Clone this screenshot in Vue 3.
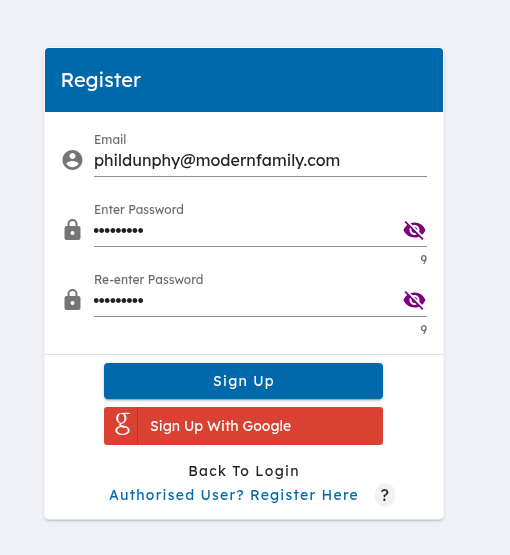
<template>
  <div class="page">
    <form class="card" @submit.prevent>
      <div class="card-header">
        <h1>Register</h1>
      </div>

      <div class="card-body">
        <div v-for="field in fields" :key="field.id" class="field">
          <svg class="field-icon" viewBox="0.5 0 24 24">
            <path :d="icons[field.icon]" />
          </svg>
          <div class="field-main">
            <label :for="field.id">{{ field.label }}</label>
            <div class="field-line">
              <input
                :id="field.id"
                v-model="field.value"
                :type="field.secret && !field.shown ? 'password' : 'text'"
                :class="{ secret: field.secret && !field.shown }"
                autocomplete="off"
                spellcheck="false"
              />
              <button
                v-if="field.secret"
                type="button"
                class="eye-btn"
                aria-label="toggle password"
                @click="field.shown = !field.shown"
              >
                <svg viewBox="0.5 0 24 24">
                  <path :d="field.shown ? icons.eye : icons.eyeOff" />
                </svg>
              </button>
            </div>
            <div v-if="field.secret" class="counter">{{ field.value.length }}</div>
          </div>
        </div>
      </div>

      <div class="card-actions">
        <button type="submit" class="signup-btn"><span>Sign Up</span></button>
        <button type="button" class="google-btn">
          <span class="google-logo">
            <svg viewBox="0 0 16 24">
              <path class="ring" d="M1 6.3a5.3 5.4 0 1 0 10.6 0a5.3 5.4 0 1 0-10.6 0zM3.3 6.3a3 4.5 0 1 1 6 0a3 4.5 0 1 1-6 0z" />
              <path class="ring" d="M0.3 18.4a7.2 4.7 0 1 0 14.4 0a7.2 4.7 0 1 0-14.4 0zM2.3 18.3a5.3 3.6 0 1 1 10.6 0a5.3 3.6 0 1 1-10.6 0z" />
              <path class="ear" d="M6.5 1.4H15" />
              <path class="neck" d="M6.2 11.3C4.4 12.8 5 14 7.6 14.5L10.5 15.1" />
            </svg>
          </span>
          <span class="google-text">Sign Up With Google</span>
        </button>
        <a class="link back">Back To Login</a>
        <div class="help-row">
          <a class="link authorised">Authorised User? Register Here</a>
          <span class="help">?</span>
        </div>
      </div>
    </form>
  </div>
</template>

<script setup>
import { reactive } from 'vue'

// form fields, in display order
const fields = reactive([
  { id: 'email', label: 'Email', icon: 'account', value: 'phildunphy@modernfamily.com', secret: false, shown: false },
  { id: 'password', label: 'Enter Password', icon: 'lock', value: 'dunphy123', secret: true, shown: false },
  { id: 'repeat', label: 'Re-enter Password', icon: 'lock', value: 'dunphy123', secret: true, shown: false }
])

// material icon paths
const icons = {
  account: 'M12 2C6.48 2 2 6.48 2 12s4.48 10 10 10 10-4.48 10-10S17.52 2 12 2zm0 3c1.66 0 3 1.34 3 3s-1.34 3-3 3-3-1.34-3-3 1.34-3 3-3zm0 14.2c-2.5 0-4.71-1.28-6-3.22.03-1.99 4-3.08 6-3.08 1.99 0 5.97 1.09 6 3.08-1.29 1.94-3.5 3.22-6 3.22z',
  lock: 'M12 17a2 2 0 0 0 2-2a2 2 0 0 0-4 0a2 2 0 0 0 2 2m6-9a2 2 0 0 1 2 2v10a2 2 0 0 1-2 2H6a2 2 0 0 1-2-2V10a2 2 0 0 1 2-2h1V6a5 5 0 0 1 10 0v2h1m-6-5a3 3 0 0 0-3 3v2h6V6a3 3 0 0 0-3-3z',
  eye: 'M12 4.5C7 4.5 2.73 7.61 1 12c1.73 4.39 6 7.5 11 7.5s9.27-3.11 11-7.5c-1.73-4.39-6-7.5-11-7.5zM12 17c-2.76 0-5-2.24-5-5s2.24-5 5-5 5 2.24 5 5-2.24 5-5 5zm0-8c-1.66 0-3 1.34-3 3s1.34 3 3 3 3-1.34 3-3-1.34-3-3-3z',
  eyeOff: 'M12 7c2.76 0 5 2.24 5 5 0 .65-.13 1.26-.36 1.83l2.92 2.92c1.51-1.26 2.7-2.89 3.43-4.75-1.73-4.39-6-7.5-11-7.5-1.4 0-2.74.25-3.98.7l2.16 2.16C10.74 7.13 11.35 7 12 7zM2 4.27l2.28 2.28.46.46C3.08 8.3 1.78 10.02 1 12c1.73 4.39 6 7.5 11 7.5 1.55 0 3.03-.3 4.38-.84l.42.42L19.73 22 21 20.73 3.27 3 2 4.27zM7.53 9.8l1.55 1.55c-.05.21-.08.43-.08.65 0 1.66 1.34 3 3 3 .22 0 .44-.03.65-.08l1.55 1.55c-.67.33-1.41.53-2.2.53-2.76 0-5-2.24-5-5 0-.79.2-1.53.53-2.2zm4.31-.78l3.15 3.15.02-.16c0-1.66-1.34-3-3-3l-.17.01z'
}
</script>

<style>
body {
  background: #eff1f6;
}
</style>

<style scoped>
.page {
  min-height: 555px;
  padding: 48px 67px 0 45px;
  box-sizing: border-box;
  background: #eff1f6;
  font-family: "Lexend Deca", Lexend, Inter, sans-serif;
  color: rgba(0, 0, 0, 0.87);
}

.card {
  height: 470.5px;
  background: #fff;
  border-radius: 4px;
  overflow: hidden;
  will-change: transform;
  box-shadow: 0 0 0 1px rgba(255, 255, 255, 0.7), 0 3px 1px -2px rgba(0, 0, 0, 0.2), 0 2px 2px 0 rgba(0, 0, 0, 0.14), 0 1px 5px 0 rgba(0, 0, 0, 0.12);
}

.card-header {
  height: 64px;
  padding: 0 15.5px;
  display: flex;
  align-items: center;
  background: #0069ac;
}

.card-header h1 {
  margin: 0 0 1px;
  color: #fff;
  font-size: 20px;
  font-weight: 400;
}

.card-body {
  height: 242px;
  padding: 16px 16px 0;
  box-sizing: border-box;
}

.field {
  height: 70px;
  display: flex;
  gap: 9px;
}

.field-icon {
  width: 24px;
  height: 24px;
  margin-top: 20px;
  flex: none;
  fill: #757575;
}

.field-main {
  flex: 1;
  min-width: 0;
}

label {
  display: block;
  height: 20px;
  padding-top: 3px;
  box-sizing: border-box;
  color: rgba(0, 0, 0, 0.6);
  font-size: 12px;
  line-height: 18px;
}

.field-line {
  height: 29px;
  box-sizing: border-box;
  display: flex;
  border-bottom: 1px solid #8f8f8f;
}

input {
  flex: 1;
  min-width: 0;
  height: 24px;
  margin: 0;
  padding: 0;
  border: none;
  outline: none;
  background: transparent;
  color: inherit;
  font-family: inherit;
  font-size: 16px;
}

input.secret {
  padding-top: 1px;
  font-family: "Liberation Sans", sans-serif;
  font-size: 18px;
  letter-spacing: -0.75px;
  text-indent: -1px;
}

.eye-btn {
  width: 24px;
  height: 24px;
  padding: 0;
  border: none;
  background: none;
  cursor: pointer;
}

.eye-btn svg {
  display: block;
  width: 24px;
  height: 24px;
  fill: #7b0080;
}

.counter {
  padding-top: 5px;
  color: rgba(0, 0, 0, 0.6);
  font-size: 12px;
  line-height: 16px;
  text-align: right;
}

.card-actions {
  display: flex;
  flex-direction: column;
  align-items: center;
  padding: 8px 1px 0 0;
  border-top: 1px solid #dedede;
}

.signup-btn {
  width: 279px;
  height: 36px;
  border: none;
  border-radius: 4px;
  background: #0069ac;
  box-shadow: 0 3px 1px -2px rgba(0, 0, 0, 0.2), 0 2px 2px 0 rgba(0, 0, 0, 0.14), 0 1px 5px 0 rgba(0, 0, 0, 0.12);
  color: #fff;
  font-family: inherit;
  font-size: 14px;
  letter-spacing: 1.25px;
  text-indent: 1px;
  cursor: pointer;
}

.google-btn {
  width: 279px;
  height: 38px;
  margin-top: 8px;
  padding: 0;
  display: flex;
  align-items: center;
  border: none;
  border-radius: 3px;
  background: #d94233;
  color: #fff;
  font-family: inherit;
  font-size: 14px;
  cursor: pointer;
}

.google-logo {
  width: 34px;
  height: 38px;
  padding: 5px 0 0 11px;
  box-sizing: border-box;
  border-right: 1px solid #b5372b;
}

.google-logo svg {
  display: block;
  width: 16px;
  height: 24px;
}

.ring {
  fill: #fff;
  fill-rule: evenodd;
}

.ear {
  stroke: #fff;
  stroke-width: 1.2;
}

.neck {
  fill: none;
  stroke: #fff;
  stroke-width: 1.8;
}

.google-text {
  margin-left: 12px;
}

.link {
  font-size: 14px;
  line-height: 24px;
  white-space: nowrap;
  cursor: pointer;
}

.back {
  margin: 14px 0 0 1px;
  letter-spacing: 1.28px;
}

.help-row {
  display: flex;
  align-items: center;
  gap: 16px;
  margin-left: 17px;
}

.authorised {
  color: #0069ac;
  letter-spacing: 1.25px;
}

.help {
  width: 20px;
  height: 24px;
  border-radius: 10px;
  background: #eff1f6;
  font-size: 16px;
  line-height: 24px;
  text-align: center;
}
</style>
